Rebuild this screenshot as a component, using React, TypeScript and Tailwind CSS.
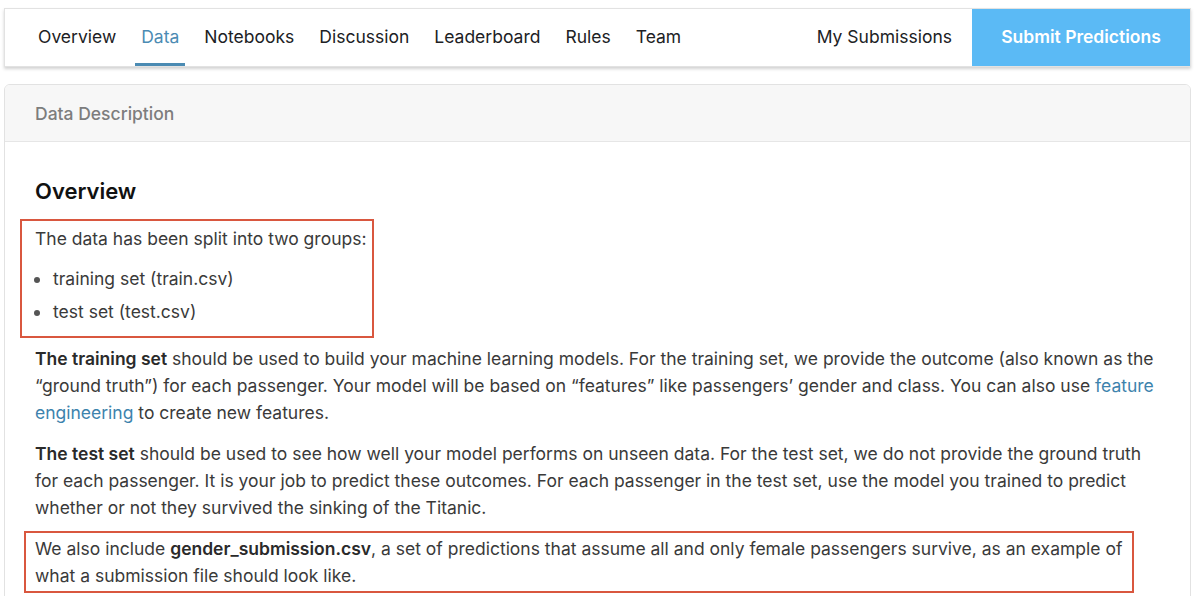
import React from 'react';

const tabs = ['Overview', 'Data', 'Notebooks', 'Discussion', 'Leaderboard', 'Rules', 'Team'];

export default function App() {
  return (
    <div className="min-h-screen bg-white text-[#3a3a3a]" style={{ fontFamily: 'Inter, "Liberation Sans", sans-serif' }}>
      <div className="pl-[4px] pr-[9px] pt-[8px]">
        {/* Top nav */}
        <div className="flex items-stretch h-[59px] bg-white border border-[#e2e2e2] shadow-[0_2px_3px_rgba(0,0,0,0.18)]">
          <div className="flex items-stretch pl-[32px] gap-[23px]">
            {tabs.map(t => (
              <div
                key={t}
                className={`relative flex items-center px-[1px] text-[17.5px] ${
                  t === 'Data' ? 'text-[#4b8bb3]' : 'text-[#202124]'
                }`}
              >
                {t}
                {t === 'Data' && (
                  <span className="absolute left-[-5px] right-[-5px] bottom-[0px] h-[3px] bg-[#4b8bb3]" />
                )}
              </div>
            ))}
          </div>
          <div className="ml-auto flex items-center pr-[20px] text-[17.5px] text-[#202124]">My Submissions</div>
          <div className="flex items-center justify-center w-[218px] bg-[#5bbaf5] text-white font-semibold text-[17.5px]">
            Submit Predictions
          </div>
        </div>

        {/* Card */}
        <div className="mt-[17px] border border-[#e2e2e2] rounded-t-[6px] overflow-hidden">
          <div className="h-[57px] bg-[#f7f7f7] border-b border-[#e6e6e6] flex items-center pl-[30px] pt-[2px] text-[17.5px] font-medium text-[#7d7d7d]">
            Data Description
          </div>
          <div className="pl-[30px] pr-[22px] pt-[35px] pb-[20px] text-[17.5px] leading-[27px]">
            <h2 className="text-[22px] font-semibold text-[#111] leading-[28px] mb-[14px]">Overview</h2>

            <div className="-ml-[15px] pl-[13px] pr-[6px] pt-[4px] pb-[11px] w-fit border-2 border-[#d9573f]">
              <p className="mb-[13px]">The data has been split into two groups:</p>
              <ul className="list-disc pl-[17px] space-y-[6px] marker:text-[#555]">
                <li className="pl-[1px]">training set (train.csv)</li>
                <li className="pl-[1px]">test set (test.csv)</li>
              </ul>
            </div>

            <p className="mt-[7px]">
              <span className="font-semibold text-[#2a2a2a]">The training set</span> should be used to build your machine learning models. For the training set, we provide the outcome (also known as the “ground truth”) for each passenger. Your model will be based on “features” like passengers’ gender and class. You can also use{' '}
              <span className="text-[#3d83ad]">feature engineering</span> to create new features.
            </p>

            <p className="mt-[14px]">
              <span className="font-semibold text-[#2a2a2a]">The test set</span> should be used to see how well your model performs on unseen data. For the test set, we do not provide the ground truth for each passenger. It is your job to predict these outcomes. For each passenger in the test set, use the model you trained to predict whether or not they survived the sinking of the Titanic.
            </p>

            <div className="mt-[10px] -ml-[11px] pl-[9px] pr-[8px] py-[2px] w-[1110px] border-2 border-[#d9573f]">
              <p>
                We also include <span className="font-semibold text-[#2a2a2a]">gender_submission.csv</span>, a set of predictions that assume all and only female passengers survive, as an example of what a submission file should look like.
              </p>
            </div>
          </div>
        </div>
      </div>
    </div>
  );
}
